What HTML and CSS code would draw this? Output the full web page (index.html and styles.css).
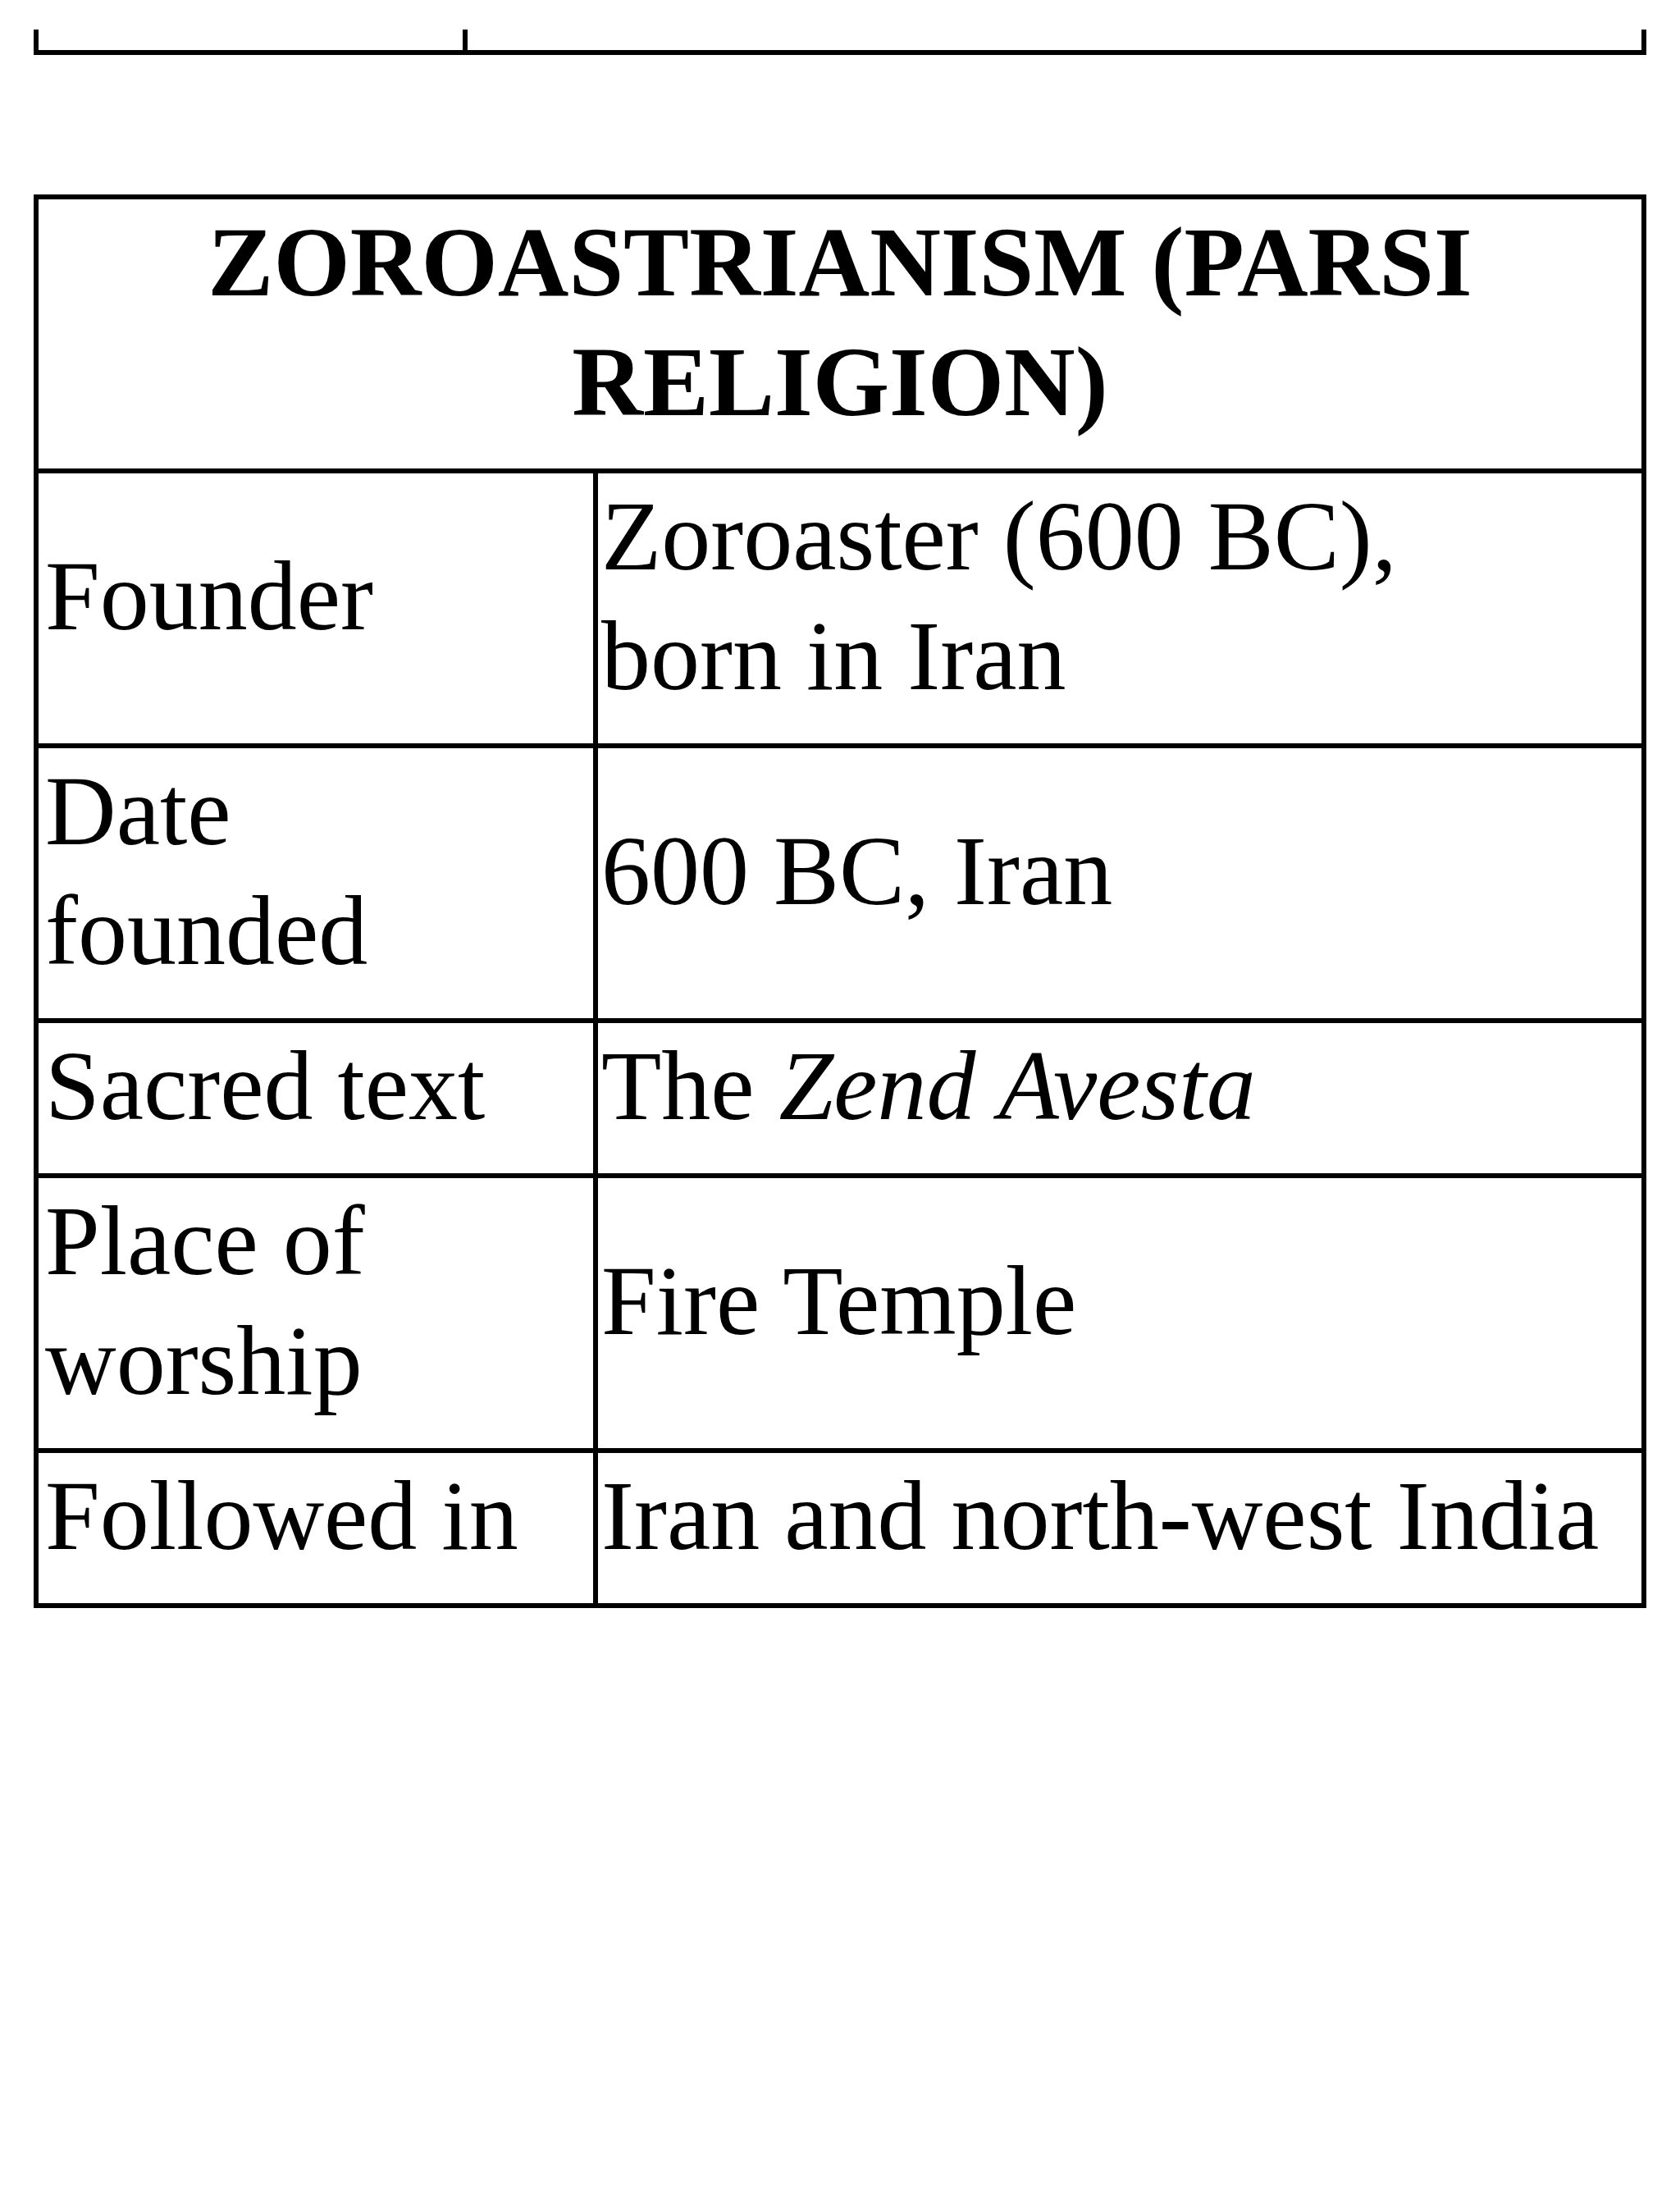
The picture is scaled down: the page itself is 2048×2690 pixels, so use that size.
FILE: index.html
```html
<!DOCTYPE html>
<html lang="en">
<head>
<meta charset="utf-8">
<title>Zoroastrianism (Parsi Religion)</title>
<link rel="stylesheet" href="styles.css">
</head>
<body>
<div class="page">
  <div class="prev-row">
    <div class="prev-cell prev-left"></div>
    <div class="prev-cell prev-right"></div>
  </div>

  <div class="info-table">
    <div class="cell title-cell">
      <p class="title">ZOROASTRIANISM (PARSI<br>RELIGION)</p>
    </div>

    <div class="cell label"><p>Founder</p></div>
    <div class="cell value"><p>Zoroaster (600 BC),<br>born in Iran</p></div>

    <div class="cell label"><p>Date<br>founded</p></div>
    <div class="cell value"><p>600 BC, Iran</p></div>

    <div class="cell label"><p>Sacred text</p></div>
    <div class="cell value"><p>The <em>Zend Avesta</em></p></div>

    <div class="cell label"><p>Place of<br>worship</p></div>
    <div class="cell value"><p>Fire Temple</p></div>

    <div class="cell label"><p>Followed in</p></div>
    <div class="cell value"><p>Iran and north-west India</p></div>
  </div>
</div>
</body>
</html>
```

FILE: styles.css
```css
html, body {
  margin: 0;
  padding: 0;
  background: #ffffff;
}

body {
  font-family: "Liberation Serif", "Times New Roman", serif;
  color: #000000;
  width: 2048px;
  min-height: 2690px;
}

.page {
  padding: 36px 0 0 41px;
}

.prev-row {
  display: flex;
  width: 1966px;
  height: 31px;
  box-sizing: border-box;
  border-bottom: 6px solid #000;
}

.prev-cell {
  box-sizing: border-box;
  border-left: 6px solid #000;
}

.prev-left {
  width: 523px;
}

.prev-right {
  flex: 1;
  border-right: 6px solid #000;
}

.info-table {
  margin-top: 170px;
  width: 1966px;
  box-sizing: border-box;
  display: grid;
  grid-template-columns: 676px 1272px;
  gap: 6px;
  padding: 6px;
  background: #000;
}

.cell {
  background: #fff;
  display: flex;
  flex-direction: column;
  justify-content: center;
  padding: 4px 4px 4px 8px;
  box-sizing: border-box;
}

.cell p {
  margin: 0 0 29px 0;
  font-size: 120px;
  line-height: 146px;
  white-space: nowrap;
}

.value {
  padding-left: 4px;
}

.title-cell {
  grid-column: 1 / span 2;
  text-align: center;
  padding: 4px 20px 3px;
}

.cell .title {
  font-weight: bold;
  font-size: 120px;
}

em {
  font-style: italic;
}
```
